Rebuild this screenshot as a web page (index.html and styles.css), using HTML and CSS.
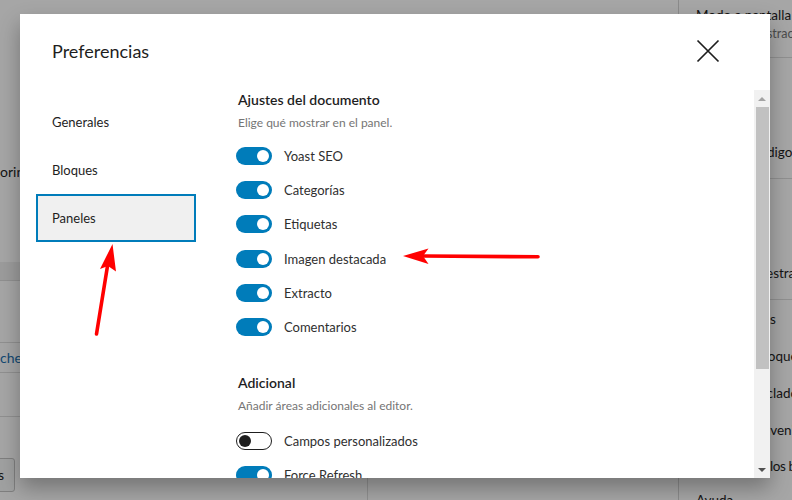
FILE: index.html
```html
<!DOCTYPE html>
<html lang="es">
<head>
    <meta charset="UTF-8">
    <meta name="viewport" content="width=device-width, initial-scale=1.0">
    <title>Preferencias</title>
    <link rel="stylesheet" href="styles.css">
</head>
<body>

<!-- editor behind the modal -->
<div class="editor">
    <div class="main">
        <div class="metaboxes">
            <div class="mb-line">oring</div>
            <div class="mb-head"></div>
            <div class="mb-row tall"></div>
            <div class="mb-row link">cher</div>
            <div class="mb-row mid"></div>
            <div class="mb-button">Opciones</div>
        </div>
        <div class="canvas">
            <div class="canvas-foot"></div>
        </div>
    </div>

    <div class="options-menu">
        <div class="menu-group first">
            <div class="menu-label">Modo a pantalla completa</div>
            <div class="menu-desc">Trabaja sin distracciones</div>
        </div>
        <div class="menu-group">
            <div class="menu-item">Editor</div>
            <div class="menu-item">Visual</div>
            <div class="menu-item">Editor de código</div>
        </div>
        <div class="menu-group">
            <div class="menu-item">Vista</div>
            <div class="menu-item">Modo foco</div>
            <div class="menu-item">Vista de muestra</div>
        </div>
        <div class="menu-group tools">
            <div class="menu-item head">Herramientas</div>
            <div class="menu-item">Gestionar bloques</div>
            <div class="menu-item">Atajos de teclado</div>
            <div class="menu-item">Guía de bienvenida</div>
            <div class="menu-item short tight">Copiar todos los bloques</div>
            <div class="menu-item short">Ayuda</div>
        </div>
    </div>
</div>

<!-- preferences modal -->
<div class="overlay">
    <div class="modal">
        <div class="modal-header">
            <h1>Preferencias</h1>
            <button class="close-btn" aria-label="Cerrar">
                <svg width="24" height="24" viewBox="0 0 24 24">
                    <path d="M1.5 1.5 L22.5 22.5 M22.5 1.5 L1.5 22.5" stroke="#1e1e1e" stroke-width="1.7" fill="none"/>
                </svg>
            </button>
        </div>

        <div class="modal-body">
            <div class="tabs">
                <div class="tab">Generales</div>
                <div class="tab">Bloques</div>
                <div class="tab active">Paneles</div>
            </div>

            <div class="panel">
                <div class="section">
                    <h2>Ajustes del documento</h2>
                    <p class="desc">Elige qué mostrar en el panel.</p>
                    <div class="option"><span class="toggle"></span>Yoast SEO</div>
                    <div class="option"><span class="toggle"></span>Categorías</div>
                    <div class="option"><span class="toggle"></span>Etiquetas</div>
                    <div class="option"><span class="toggle"></span>Imagen destacada</div>
                    <div class="option"><span class="toggle"></span>Extracto</div>
                    <div class="option"><span class="toggle"></span>Comentarios</div>
                </div>
                <div class="section extra">
                    <h2>Adicional</h2>
                    <p class="desc">Añadir áreas adicionales al editor.</p>
                    <div class="option"><span class="toggle off"></span>Campos personalizados</div>
                    <div class="option"><span class="toggle"></span>Force Refresh</div>
                </div>
            </div>

            <div class="scrollbar">
                <div class="sb-btn"><span class="arrow up"></span></div>
                <div class="sb-thumb"></div>
                <div class="sb-rest"></div>
                <div class="sb-btn"><span class="arrow down"></span></div>
            </div>
        </div>
    </div>
</div>

<!-- red annotation arrows -->
<svg class="marks" width="792" height="500" viewBox="0 0 792 500">
    <line x1="96.5" y1="334" x2="107.5" y2="266" stroke="#f00" stroke-width="3.6" stroke-linecap="round"/>
    <polygon points="112.5,244 116,271.5 108,266 100,269" fill="#f00"/>
    <line x1="538" y1="256.8" x2="424" y2="256" stroke="#f00" stroke-width="3.6" stroke-linecap="round"/>
    <polygon points="403,256 428.5,248.5 423,256 428.5,264" fill="#f00"/>
</svg>

</body>
</html>
```

FILE: styles.css
```css
body {
    margin: 0;
    width: 792px;
    height: 500px;
    overflow: hidden;
    position: relative;
    background-color: #fff;
    color: #1e1e1e;
    font-family: Lato, "Noto Sans", sans-serif;
    font-size: 13px;
}

/* editor underneath */
.editor {
    display: flex;
    height: 500px;
}
.main {
    flex: 1;
    display: flex;
}
.metaboxes {
    width: 367px;
    padding-top: 160px;
}
.mb-line {
    height: 24px;
    line-height: 24px;
    font-size: 14px;
}
.mb-head {
    margin-top: 78px;
    height: 18px;
    background-color: #f0f0f0;
    border-bottom: 1px solid #ddd;
}
.mb-row {
    border-bottom: 1px solid #ddd;
}
.mb-row.tall {
    height: 61px;
}
.mb-row.link {
    height: 29px;
    line-height: 30px;
    color: #2271b1;
    font-size: 14px;
}
.mb-row.mid {
    height: 43px;
}
.mb-button {
    margin-top: 41px;
    margin-left: -60px;
    width: 75px;
    height: 34px;
    box-sizing: border-box;
    border: 1px solid #c3c3c3;
    border-radius: 3px;
    background-color: #f6f7f7;
    text-align: right;
    padding-right: 10px;
    line-height: 32px;
    font-size: 14px;
}
.canvas {
    flex: 1;
    display: flex;
    flex-direction: column;
    justify-content: flex-end;
}
.canvas-foot {
    height: 22px;
    border-left: 1px solid #ddd;
}

.options-menu {
    width: 114px;
    box-sizing: border-box;
    flex: none;
    border-left: 1px solid #d6d6d6;
    padding-left: 17px;
    white-space: nowrap;
    overflow: hidden;
    font-size: 13.5px;
}
.menu-group {
    border-bottom: 1px solid #ddd;
    padding: 4px 0 8px 17px;
    margin-left: -17px;
}
.menu-group.first {
    height: 44px;
    padding: 6px 0 7px 17px;
}
.menu-label {
    line-height: 18px;
}
.menu-desc {
    line-height: 16px;
    font-size: 12.5px;
    color: #757575;
    margin-top: 2px;
}
.menu-item {
    height: 36px;
    line-height: 36px;
}
.menu-group.tools {
    border-bottom: none;
    padding-top: 0;
}
.tools .menu-item {
    height: 37px;
    line-height: 37px;
}
.tools .menu-item.head {
    height: 38px;
    line-height: 38px;
}
.tools .menu-item.short {
    height: 34px;
    line-height: 34px;
}
.menu-item.tight {
    letter-spacing: -0.4px;
}

/* modal */
.overlay {
    position: absolute;
    top: 0;
    left: 0;
    right: 0;
    bottom: 0;
    background-color: rgba(0, 0, 0, 0.35);
    padding: 14px 0 0 20px;
}
.modal {
    width: 750px;
    height: 464px;
    background-color: #fff;
    box-shadow: 0 10px 20px rgba(0, 0, 0, 0.3);
    display: flex;
    flex-direction: column;
}
.modal-header {
    height: 76px;
    box-sizing: border-box;
    padding: 0 50px 0 32px;
    display: flex;
    align-items: center;
    justify-content: space-between;
    flex: none;
}
.modal-header h1 {
    margin: 0 0 2px;
    font-size: 18px;
    font-weight: 400;
    line-height: 24px;
}
.close-btn {
    width: 24px;
    height: 24px;
    padding: 0;
    margin-bottom: 2px;
    border: none;
    background: none;
    cursor: pointer;
}
.close-btn svg {
    display: block;
}

.modal-body {
    flex: 1;
    display: flex;
    min-height: 0;
}
.tabs {
    width: 160px;
    padding: 8px 0 0 16px;
    flex: none;
}
.tab {
    height: 48px;
    box-sizing: border-box;
    line-height: 48px;
    padding-left: 16px;
    font-size: 13px;
}
.tab.active {
    background-color: #f0f0f0;
    border: 2px solid #007cba;
    line-height: 44px;
    padding-left: 14px;
}

.panel {
    flex: 1;
    margin-left: 40px;
    overflow: hidden;
}
.section h2 {
    margin: 0;
    font-size: 14px;
    font-weight: 600;
    line-height: 20px;
    padding-left: 2px;
}
.section.extra {
    margin-top: 29px;
}
.desc {
    margin: 4px 0 7px;
    padding-left: 2px;
    line-height: 18px;
    font-size: 12px;
    color: #757575;
}
.extra .desc {
    margin-bottom: 9px;
}
.option {
    display: flex;
    align-items: center;
    gap: 12px;
    height: 34px;
    font-size: 13px;
    color: #2f2f2f;
}
.section div.option:nth-of-type(4) {
    margin-top: 1px;
}
.toggle {
    position: relative;
    flex: none;
    width: 36px;
    height: 18px;
    box-sizing: border-box;
    border-radius: 9px;
    background-color: #007cba;
}
.toggle::after {
    content: "";
    position: absolute;
    top: 3px;
    right: 3px;
    width: 12px;
    height: 12px;
    border-radius: 50%;
    background-color: #fff;
}
.toggle.off {
    background-color: #fff;
    border: 1px solid #1e1e1e;
}
.toggle.off::after {
    top: 2px;
    left: 2px;
    right: auto;
    background-color: #1e1e1e;
}

/* fake scrollbar */
.scrollbar {
    width: 16px;
    flex: none;
    background-color: #f1f1f1;
    display: flex;
    flex-direction: column;
}
.sb-btn {
    height: 17px;
    display: flex;
    align-items: center;
    justify-content: center;
}
.sb-thumb {
    height: 262px;
    margin: 0 1px 0 2px;
    background-color: #c1c1c1;
}
.sb-rest {
    flex: 1;
}
.arrow {
    width: 0;
    height: 0;
    border-left: 4px solid transparent;
    border-right: 4px solid transparent;
}
.arrow.up {
    border-bottom: 4px solid #a3a3a3;
}
.arrow.down {
    border-top: 4px solid #505050;
}

.marks {
    position: absolute;
    top: 0;
    left: 0;
    pointer-events: none;
}
```
